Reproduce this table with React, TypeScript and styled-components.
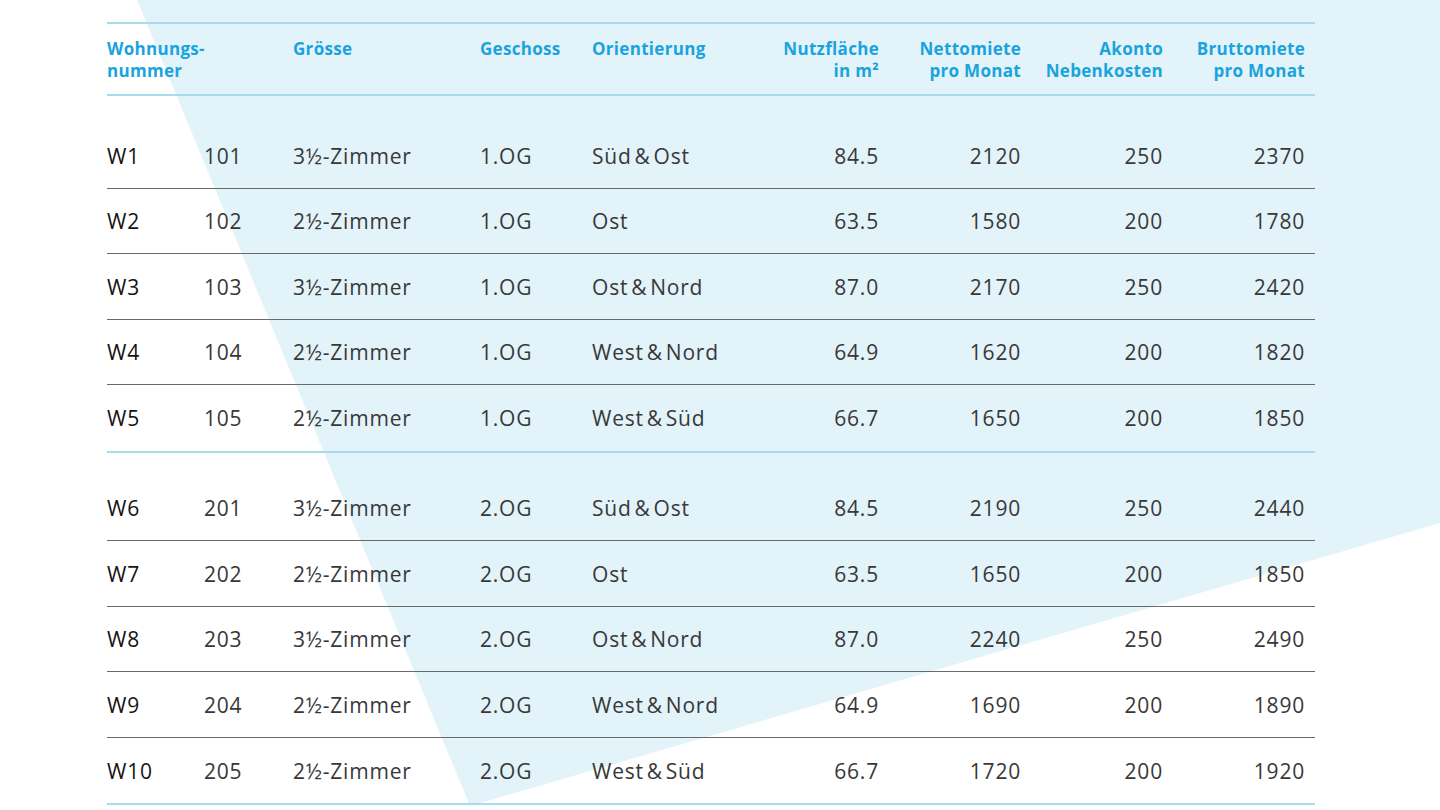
import styled, { createGlobalStyle } from "styled-components";

type Unit = {
  id: string;
  nr: string;
  size: string;
  floor: string;
  orient: string;
  area: string;
  net: string;
  extra: string;
  gross: string;
};

const groups: Unit[][] = [
  [
    { id: "W1", nr: "101", size: "3½-Zimmer", floor: "1.OG", orient: "Süd\u200A&\u200AOst", area: "84.5", net: "2120", extra: "250", gross: "2370" },
    { id: "W2", nr: "102", size: "2½-Zimmer", floor: "1.OG", orient: "Ost", area: "63.5", net: "1580", extra: "200", gross: "1780" },
    { id: "W3", nr: "103", size: "3½-Zimmer", floor: "1.OG", orient: "Ost\u200A&\u200ANord", area: "87.0", net: "2170", extra: "250", gross: "2420" },
    { id: "W4", nr: "104", size: "2½-Zimmer", floor: "1.OG", orient: "West\u200A&\u200ANord", area: "64.9", net: "1620", extra: "200", gross: "1820" },
    { id: "W5", nr: "105", size: "2½-Zimmer", floor: "1.OG", orient: "West\u200A&\u200ASüd", area: "66.7", net: "1650", extra: "200", gross: "1850" },
  ],
  [
    { id: "W6", nr: "201", size: "3½-Zimmer", floor: "2.OG", orient: "Süd\u200A&\u200AOst", area: "84.5", net: "2190", extra: "250", gross: "2440" },
    { id: "W7", nr: "202", size: "2½-Zimmer", floor: "2.OG", orient: "Ost", area: "63.5", net: "1650", extra: "200", gross: "1850" },
    { id: "W8", nr: "203", size: "3½-Zimmer", floor: "2.OG", orient: "Ost\u200A&\u200ANord", area: "87.0", net: "2240", extra: "250", gross: "2490" },
    { id: "W9", nr: "204", size: "2½-Zimmer", floor: "2.OG", orient: "West\u200A&\u200ANord", area: "64.9", net: "1690", extra: "200", gross: "1890" },
    { id: "W10", nr: "205", size: "2½-Zimmer", floor: "2.OG", orient: "West\u200A&\u200ASüd", area: "66.7", net: "1720", extra: "200", gross: "1920" },
  ],
];

export default function App() {
  return (
    <>
      <GlobalStyle />
      <SPage>
        <STable>
          <SHead>
            <SHeadCell $span={2}>
              Wohnungs-
              <br />
              nummer
            </SHeadCell>
            <SHeadCell>Grösse</SHeadCell>
            <SHeadCell>Geschoss</SHeadCell>
            <SHeadCell>Orientierung</SHeadCell>
            <SHeadCell $right>
              Nutzfläche
              <br />
              in m²
            </SHeadCell>
            <SHeadCell $right>
              Nettomiete
              <br />
              pro Monat
            </SHeadCell>
            <SHeadCell $right>
              Akonto
              <br />
              Nebenkosten
            </SHeadCell>
            <SHeadCell $right>
              Bruttomiete
              <br />
              pro Monat
            </SHeadCell>
          </SHead>
          {groups.map((units, g) => (
            <SGroup key={g}>
              {units.map((u) => (
                <SRow key={u.id}>
                  <SCell $strong>{u.id}</SCell>
                  <SCell>{u.nr}</SCell>
                  <SCell>{u.size}</SCell>
                  <SCell>{u.floor}</SCell>
                  <SCell>{u.orient}</SCell>
                  <SCell $right>{u.area}</SCell>
                  <SCell $right>{u.net}</SCell>
                  <SCell $right>{u.extra}</SCell>
                  <SCell $right>{u.gross}</SCell>
                </SRow>
              ))}
            </SGroup>
          ))}
        </STable>
      </SPage>
    </>
  );
}

const GlobalStyle = createGlobalStyle`
  html, body {
    margin: 0;
    padding: 0;
    background: #ffffff;
  }
  body {
    font-family: "Open Sans", "Liberation Sans", sans-serif;
  }
`;

const SPage = styled.div`
  position: relative;
  width: 1440px;
  height: 810px;
  overflow: hidden;
  background: #ffffff;

  &::before {
    content: "";
    position: absolute;
    inset: 0;
    background: #e3f3fa;
    clip-path: polygon(137px 0, 1440px 0, 1440px 523px, 470px 806px);
  }
`;

const STable = styled.div`
  position: relative;
  margin-left: 107px;
  padding-top: 22px;
  width: 1208px;
`;

const cols = "97px 89px 187px 112px 155px 142px 142px 142px 142px";

const SHead = styled.div`
  display: grid;
  grid-template-columns: ${cols};
  border-top: 2px solid #a8daf0;
  border-bottom: 2px solid #a8daf0;
  padding: 14px 0 12px;
`;

const SHeadCell = styled.div<{ $span?: number; $right?: boolean }>`
  grid-column: span ${(p) => p.$span ?? 1};
  text-align: ${(p) => (p.$right ? "right" : "left")};
  padding-right: ${(p) => (p.$right ? "10px" : "0")};
  font-size: 17px;
  line-height: 22px;
  font-weight: 700;
  color: #1aa3dd;
  letter-spacing: 0.3px;
  white-space: nowrap;
`;

const SGroup = styled.div`
  border-bottom: 2px solid #a8daf0;
  padding-top: 27px;

  & + & {
    padding-top: 23px;
  }
`;

const SRow = styled.div`
  display: grid;
  grid-template-columns: ${cols};
  align-items: center;
  box-sizing: border-box;
  height: 65.5px;
  padding-top: 1px;
  border-bottom: 1px solid #6a6a6a;

  &:last-child {
    border-bottom: none;
  }
`;

const SCell = styled.div<{ $right?: boolean; $strong?: boolean }>`
  text-align: ${(p) => (p.$right ? "right" : "left")};
  padding-right: ${(p) => (p.$right ? "10px" : "0")};
  font-size: 21px;
  font-weight: 400;
  color: ${(p) => (p.$strong ? "#141414" : "#383838")};
  letter-spacing: 0.8px;
  white-space: nowrap;
`;
